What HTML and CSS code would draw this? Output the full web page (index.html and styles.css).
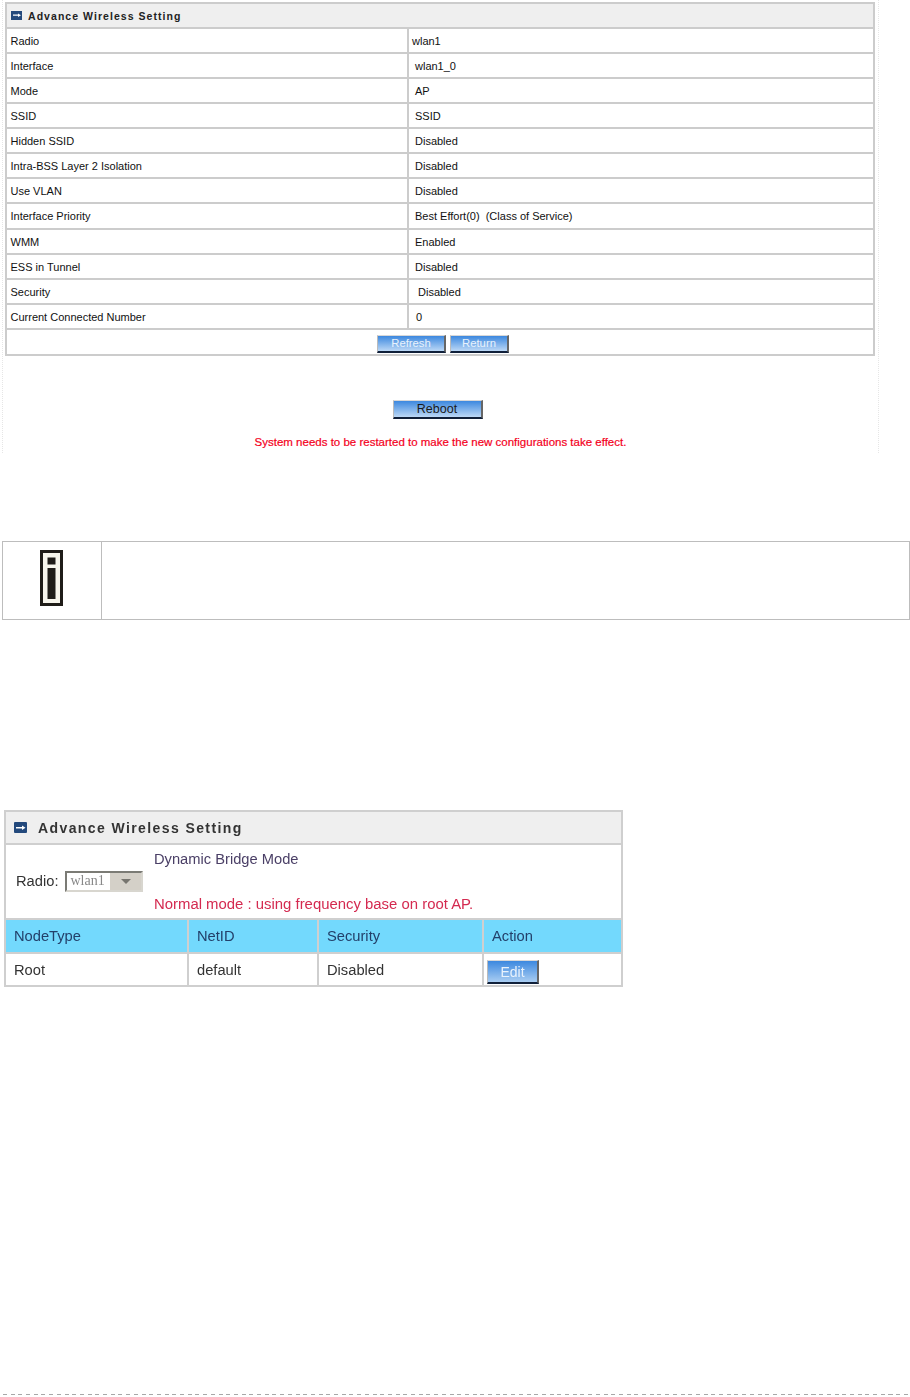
FILE: index.html
```html
<!DOCTYPE html>
<html lang="en">
<head>
<meta charset="utf-8">
<title>Advance Wireless Setting</title>
<link rel="stylesheet" href="styles.css">
</head>
<body>
<div class="page">
  <section class="shot">
    <table class="status">
      <colgroup><col class="c-label"><col></colgroup>
      <tr class="head"><th colspan="2"><span class="title">
        <svg class="mark" viewBox="0 0 11 9"><rect width="11" height="9" fill="#23497c"/><path d="M2 3.6h5V2.4L10 4.2 7 6V4.8H2z" fill="#fff"/></svg>
        Advance Wireless Setting</span></th></tr>
      <tr><td>Radio</td><td class="v0">wlan1</td></tr>
      <tr><td>Interface</td><td class="v1">wlan1_0</td></tr>
      <tr><td>Mode</td><td class="v1">AP</td></tr>
      <tr><td>SSID</td><td class="v1">SSID</td></tr>
      <tr><td>Hidden SSID</td><td class="v1">Disabled</td></tr>
      <tr><td>Intra-BSS Layer 2 Isolation</td><td class="v1">Disabled</td></tr>
      <tr><td>Use VLAN</td><td class="v1">Disabled</td></tr>
      <tr class="tall"><td>Interface Priority</td><td class="v1">Best Effort(0) &nbsp;(Class of Service)</td></tr>
      <tr><td>WMM</td><td class="v1">Enabled</td></tr>
      <tr><td>ESS in Tunnel</td><td class="v1">Disabled</td></tr>
      <tr><td>Security</td><td class="v2">Disabled</td></tr>
      <tr><td>Current Connected Number</td><td class="v3">0</td></tr>
      <tr class="tall"><td colspan="2" class="actions"><span class="btn refresh">Refresh</span><span class="btn return">Return</span></td></tr>
    </table>
    <div class="reboot-area">
      <span class="btn reboot">Reboot</span>
      <p class="warn">System needs to be restarted to make the new configurations take effect.</p>
    </div>
  </section>

  <div class="note">
    <div class="note-icon">
      <svg width="24" height="57" viewBox="0 0 24 57"><rect x="1.5" y="1.5" width="20" height="53" fill="#f7f5ec" stroke="#1f1c18" stroke-width="3"/><rect x="7.5" y="7.5" width="8" height="7" fill="#1f1c18"/><rect x="7.5" y="18" width="8" height="31" fill="#1f1c18"/></svg>
    </div>
    <div class="note-body"></div>
  </div>

  <table class="bridge">
    <colgroup><col class="b1"><col class="b2"><col class="b3"><col></colgroup>
    <tr class="bhead"><th colspan="4"><span class="btitle">
      <svg class="bmark" viewBox="0 0 13 11"><rect width="13" height="11" rx="1" fill="#23497c"/><path d="M2 5h6V3.4L11.5 5.7 8 8V6.5H2z" fill="#fff"/></svg>
      Advance Wireless Setting</span></th></tr>
    <tr class="bmode"><td colspan="4">
      <div class="mode-wrap">
        <div class="radio-field">Radio:
          <span class="select"><span class="select-val">wlan1</span><span class="select-arrow"><svg width="10" height="5" viewBox="0 0 10 5"><path d="M0 0h10L5 5z" fill="#77756f"/></svg></span></span>
        </div>
        <div class="mode-text">
          <div>Dynamic Bridge Mode</div>
          <div class="mode-warn">Normal mode : using frequency base on root AP.</div>
        </div>
      </div>
    </td></tr>
    <tr class="bcols"><td>NodeType</td><td>NetID</td><td>Security</td><td>Action</td></tr>
    <tr class="brow"><td>Root</td><td>default</td><td>Disabled</td><td><span class="btn edit">Edit</span></td></tr>
  </table>

  <div class="page-rule"></div>
</div>
</body>
</html>
```
FILE: styles.css
```css
html, body { margin: 0; padding: 0; background: #fff; }
body { font-family: "Liberation Sans", Arial, sans-serif; color: #111; }
.page { width: 910px; height: 1397px; overflow: hidden; box-sizing: border-box; }

.shot { width: 875px; margin-left: 2px; height: 451px; border-left: 1px dotted #e6e6e6; border-right: 1px dotted #e6e6e6; padding-top: 2px; }

.status { border-collapse: collapse; table-layout: fixed; width: 870px; margin-left: 2px; font-size: 11px; }
.status td, .status th { border: 2px solid #cccccc; padding: 0 0 0 3.5px; box-sizing: border-box; height: 25px; text-align: left; font-weight: normal; white-space: nowrap; }
.status .tall td { height: 26px; }
.c-label { width: 402px; }
.head th { background: #efefef; }
.status .head th { padding-left: 4px; }
.title { display: flex; align-items: center; gap: 6px; font-weight: bold; font-size: 10.5px; letter-spacing: 1.05px; color: #222; }
.mark { width: 11px; height: 9px; }
.status .v0 { padding-left: 3px; }
.status .v1 { padding-left: 6px; }
.status .v2 { padding-left: 9px; }
.status .v3 { padding-left: 7px; }
.status .actions { text-align: center; padding: 4px 0 0; font-size: 0; }

.btn { display: inline-block; box-sizing: border-box; text-align: center; color: #e8f2fc; background: linear-gradient(#3c88df, #bcd8f6); border-style: solid; border-width: 1px 2px 2px 1px; border-color: #d8d8d8 #666 #10203a #bbb; }
.refresh { width: 69px; height: 18px; line-height: 15px; font-size: 11.3px; margin: 0 4px 0 6px; }
.return { width: 59px; height: 18px; line-height: 15px; font-size: 11.3px; }

.reboot-area { text-align: center; }
.reboot { width: 90px; height: 19px; line-height: 16px; font-size: 12.5px; color: #1a1a1a; margin: 44px 6px 0 0; }
.warn { margin: 16px 0 0; color: #f4001c; font-size: 11.5px; line-height: 14px; -webkit-text-stroke: 0.2px #f4001c; }

.note { display: flex; width: 908px; height: 79px; margin: 88px 0 0 2px; border: 1px solid #bdbdbd; box-sizing: border-box; }
.note-icon { width: 99px; border-right: 1px solid #bdbdbd; display: flex; justify-content: center; align-items: flex-start; padding: 8px 1px 0 0; box-sizing: border-box; }
.note-body { flex: 1; }

.bridge { border-collapse: collapse; table-layout: fixed; width: 619px; margin: 190px 0 0 4px; font-size: 14.7px; color: #333; filter: blur(0.35px); }
.bridge td, .bridge th { border: 2px solid #cfcfcf; padding: 0 0 0 8px; text-align: left; box-sizing: border-box; white-space: nowrap; }
.b1 { width: 183px; }
.b2 { width: 130px; }
.b3 { width: 165px; }
.bhead th { height: 33px; background: #efefef; }
.btitle { display: flex; align-items: center; gap: 11px; font-size: 14px; font-weight: bold; letter-spacing: 1.4px; color: #333; }
.bmark { width: 13px; height: 11px; }
.bmode td { height: 75px; padding: 0 0 0 10px; }
.mode-wrap { display: flex; align-items: center; height: 71px; }
.radio-field { display: flex; align-items: center; gap: 7px; width: 138px; margin-top: -1px; }
.select { display: flex; width: 78px; height: 21px; box-sizing: border-box; border: 2px solid; border-color: #7b7b75 #d8d6cf #d8d6cf #7b7b75; background: #fff; }
.select-val { width: 43px; font: 14px/15px "Liberation Serif", serif; color: #888; padding-left: 3px; box-sizing: border-box; }
.select-arrow { flex: 1; background: #d4d0c8; display: flex; align-items: center; justify-content: center; }
.mode-text { display: flex; flex-direction: column; gap: 29px; color: #4a3f66; margin-top: -1px; }
.mode-warn { color: #d42a50; font-size: 14.9px; }
.bcols td { height: 34px; background: #73d9fd; color: #23406a; }
.brow td { height: 33px; }
.bridge .brow td:last-child { padding: 4px 0 0 3px; }
.edit { width: 52px; height: 24px; line-height: 22px; font-size: 14px; background: linear-gradient(#3c88df, #a9cdf2); vertical-align: middle; }

.page-rule { position: absolute; left: 3px; right: 0; top: 1394px; height: 1px; background: repeating-linear-gradient(90deg, #a8a8a8 0 4px, transparent 4px 7.7px); }
```
